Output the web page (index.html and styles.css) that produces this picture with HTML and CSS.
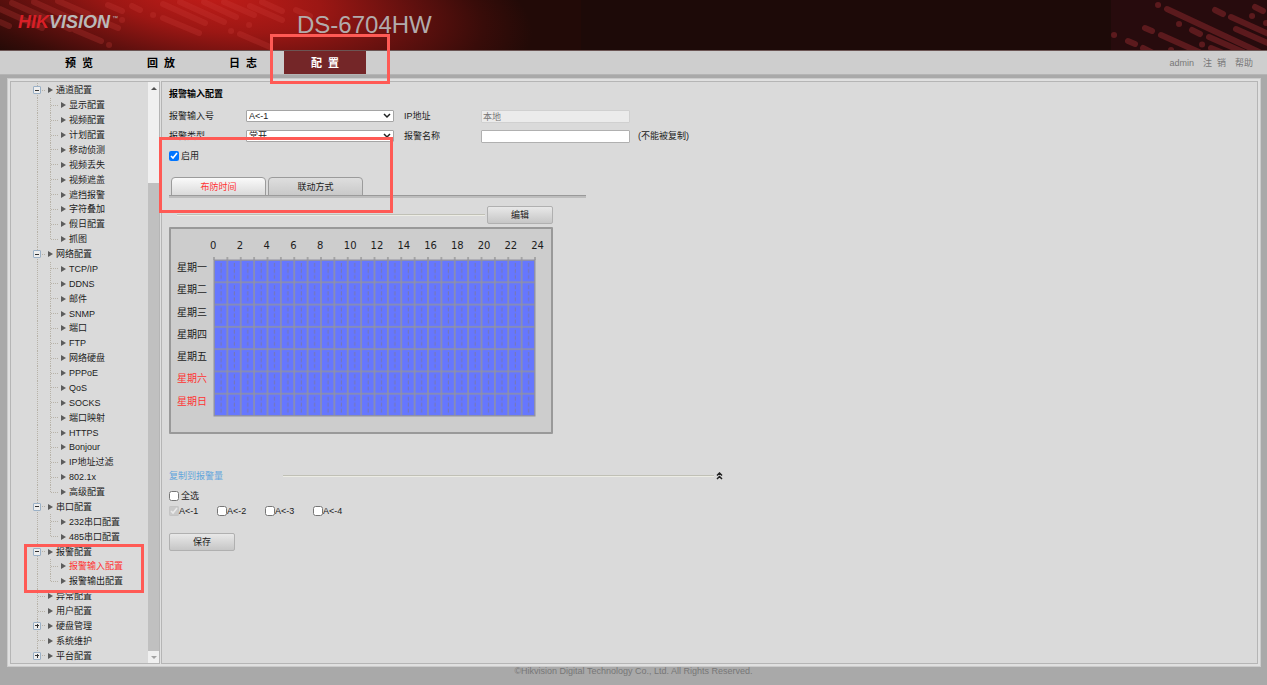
FILE: index.html
```html
<!DOCTYPE html>
<html lang="zh-CN">
<head>
<meta charset="utf-8">
<title>DS-6704HW</title>
<link rel="stylesheet" href="styles.css">
</head>
<body>
<header class="banner">
  <svg class="banner-art" width="581" height="50" viewBox="0 0 581 50" aria-hidden="true">
    <defs>
      <radialGradient id="glow" gradientUnits="userSpaceOnUse" cx="0" cy="0" r="1" gradientTransform="translate(205 -8) rotate(8) scale(330 110)">
        <stop offset="0" stop-color="#c41d19"/>
        <stop offset=".35" stop-color="#9c1714"/>
        <stop offset=".65" stop-color="#5f100e"/>
        <stop offset=".85" stop-color="#380c09"/>
        <stop offset="1" stop-color="#220a07"/>
      </radialGradient>
    </defs>
    <rect width="581" height="50" fill="url(#glow)"/>
    <g stroke="#d0403a" stroke-opacity=".25" stroke-width="6" stroke-linecap="round" fill="none">
      <path d="M0 22l9 4M0 9l42 19M12 3l58 26M34 2l40 18M58 1l30 13M75 30l26 11M109 45h.1M92 17l26 11M108 5l14 6M132 6l8 4M153 15h.1M122 20h.1M163 18l36 15M163 4l42 19M180 2l44 20M231 31h.1M204 2l32 15M249 25h.1M224 2l30 13M250 6l32 14M262 2l20 9M296 10l14 6M240 34l30 13"/>
    </g>
  </svg>
  <svg class="banner-edge" width="156" height="50" viewBox="0 0 156 50" aria-hidden="true">
    <rect width="156" height="50" fill="#270b0d"/>
    <g stroke="#5b1a1d" stroke-width="6" stroke-linecap="round" fill="none">
      <path d="M3 35h.1M17 41l7 3M32 48l10 5M34 28l7 3M50 35l38 17M47 5h.1M56 9l92 43M68 24h.1M81 30l8 4M60 50h.1M91 44.500h.1M100 48l12 5M98 37l34 15M104 10l8 4M120 17l40 18M125 29l34 15M144 7l8 4M141 16h.1M155 23h.1"/>
    </g>
  </svg>
  <div class="logo"><span class="logo-red">HIK</span>VISION<sup class="tm">™</sup></div>
  <h1 class="model">DS-6704HW</h1>
</header>
<nav class="nav">
  <a class="tab-link" href="#">预&nbsp;&nbsp;览</a>
  <a class="tab-link" href="#">回&nbsp;&nbsp;放</a>
  <a class="tab-link" href="#">日&nbsp;&nbsp;志</a>
  <a class="tab-link current" href="#">配&nbsp;&nbsp;置<span class="mark mark-nav"></span></a>
  <div class="user">
    <span>admin</span><a href="#">注&nbsp;&nbsp;销</a><a href="#">帮助</a>
  </div>
</nav>
<div class="frame">
  <aside class="side">
    <ul class="tree">
      <li class="top"><button class="toggle minus" aria-label="收起"></button><a href="#">通道配置</a></li>
      <li class="sub"><a href="#">显示配置</a></li>
      <li class="sub"><a href="#">视频配置</a></li>
      <li class="sub"><a href="#">计划配置</a></li>
      <li class="sub"><a href="#">移动侦测</a></li>
      <li class="sub"><a href="#">视频丢失</a></li>
      <li class="sub"><a href="#">视频遮盖</a></li>
      <li class="sub"><a href="#">遮挡报警</a></li>
      <li class="sub"><a href="#">字符叠加</a></li>
      <li class="sub"><a href="#">假日配置</a></li>
      <li class="sub last"><a href="#">抓图</a></li>
      <li class="top"><button class="toggle minus" aria-label="收起"></button><a href="#">网络配置</a></li>
      <li class="sub"><a href="#">TCP/IP</a></li>
      <li class="sub"><a href="#">DDNS</a></li>
      <li class="sub"><a href="#">邮件</a></li>
      <li class="sub"><a href="#">SNMP</a></li>
      <li class="sub"><a href="#">端口</a></li>
      <li class="sub"><a href="#">FTP</a></li>
      <li class="sub"><a href="#">网络硬盘</a></li>
      <li class="sub"><a href="#">PPPoE</a></li>
      <li class="sub"><a href="#">QoS</a></li>
      <li class="sub"><a href="#">SOCKS</a></li>
      <li class="sub"><a href="#">端口映射</a></li>
      <li class="sub"><a href="#">HTTPS</a></li>
      <li class="sub"><a href="#">Bonjour</a></li>
      <li class="sub"><a href="#">IP地址过滤</a></li>
      <li class="sub"><a href="#">802.1x</a></li>
      <li class="sub last"><a href="#">高级配置</a></li>
      <li class="top"><button class="toggle minus" aria-label="收起"></button><a href="#">串口配置</a></li>
      <li class="sub"><a href="#">232串口配置</a></li>
      <li class="sub last"><a href="#">485串口配置</a></li>
      <li class="top"><button class="toggle minus" aria-label="收起"></button><a href="#">报警配置</a><span class="mark mark-tree"></span></li>
      <li class="sub"><a class="chosen" href="#">报警输入配置</a></li>
      <li class="sub last"><a href="#">报警输出配置</a></li>
      <li class="top leaf"><a href="#">异常配置</a></li>
      <li class="top leaf"><a href="#">用户配置</a></li>
      <li class="top"><button class="toggle plus" aria-label="展开"></button><a href="#">硬盘管理</a></li>
      <li class="top leaf"><a href="#">系统维护</a></li>
      <li class="top"><button class="toggle plus" aria-label="展开"></button><a href="#">平台配置</a></li>
    </ul>
    <div class="scroll" aria-hidden="true">
      <div class="scroll-up"></div>
      <div class="scroll-space"></div>
      <div class="scroll-thumb"></div>
      <div class="scroll-down"></div>
    </div>
  </aside>
  <main class="main">
    <h2 class="heading">报警输入配置</h2>
    <div class="form">
      <label for="alarm-no">报警输入号</label>
      <div class="pick"><select id="alarm-no"><option>A&lt;-1</option></select><svg class="chev" width="8" height="6" viewBox="0 0 8 6"><path d="M1 1l3 3 3-3"/></svg></div>
      <label for="ip">IP地址</label>
      <input id="ip" class="field" type="text" value="本地" disabled>
      <span></span>
      <label for="alarm-type">报警类型</label>
      <div class="pick"><select id="alarm-type"><option>常开</option></select><svg class="chev" width="8" height="6" viewBox="0 0 8 6"><path d="M1 1l3 3 3-3"/></svg></div>
      <label for="alarm-name">报警名称</label>
      <input id="alarm-name" class="field" type="text">
      <span class="note">(不能被复制)</span>
    </div>
    <div class="enable"><input id="enable" type="checkbox" checked><label for="enable">启用</label><span class="mark mark-form"></span></div>
    <div class="tabs">
      <button class="tab active">布防时间</button>
      <button class="tab">联动方式</button>
    </div>
    <div class="edit-row"><span class="rule"></span><button class="btn">编辑</button></div>
    <section class="plan">
      <div class="hours"><span>0</span><span>2</span><span>4</span><span>6</span><span>8</span><span>10</span><span>12</span><span>14</span><span>16</span><span>18</span><span>20</span><span>22</span><span>24</span></div>
      <div class="week">
        <div class="days"><span>星期一</span><span>星期二</span><span>星期三</span><span>星期四</span><span>星期五</span><span class="off">星期六</span><span class="off">星期日</span></div>
        <svg class="cells" width="323" height="161" viewBox="0 0 323 161" aria-hidden="true">
          <defs>
            <pattern id="cell" patternUnits="userSpaceOnUse" x="1" y="4" width="13.375" height="22.286">
              <path d="M7 3v18" stroke="#7676ac" stroke-width="1" stroke-dasharray="4 2" fill="none"/>
              <path d="M0 0v22.300M13.375 0v22.300M0 0h13.400M0 22.286h13.400" stroke="#9092a2" stroke-width="1.500" fill="none"/>
            </pattern>
            <pattern id="tick" patternUnits="userSpaceOnUse" x="1" y="0" width="13.375" height="4">
              <path d="M0 0v4M13.375 0v4" stroke="#999" stroke-width="1.500"/>
            </pattern>
          </defs>
          <rect x="0" y="1" width="323" height="3" fill="url(#tick)"/>
          <rect x="1" y="4" width="321" height="156" fill="#6677ff"/>
          <rect x="1" y="4" width="321" height="156" fill="url(#cell)"/>
          <rect x="1" y="4" width="321" height="156" fill="none" stroke="#9292a0"/>
        </svg>
      </div>
    </section>
    <div class="copy"><span class="copy-title">复制到报警量</span><span class="rule"></span><button class="fold" aria-label="收起"><svg width="7" height="8" viewBox="0 0 7 8"><path d="M1 3.500L3.500 1 6 3.500M1 7l2.500-2.500L6 7"/></svg></button></div>
    <div class="all"><input id="all" type="checkbox"><label for="all">全选</label></div>
    <div class="inputs">
      <label><input type="checkbox" checked disabled>A&lt;-1</label>
      <label><input type="checkbox">A&lt;-2</label>
      <label><input type="checkbox">A&lt;-3</label>
      <label><input type="checkbox">A&lt;-4</label>
    </div>
    <button class="btn">保存</button>
  </main>
</div>
<footer class="foot">©Hikvision Digital Technology Co., Ltd. All Rights Reserved.</footer>
</body>
</html>
```

FILE: styles.css
```css
* { box-sizing: border-box; }

body {
  margin: 0;
  min-height: 100vh;
  display: flex;
  flex-direction: column;
  background: #a9a9a9;
  color: #1c1c1c;
  font: 9px/12px "Liberation Sans", "Noto Sans CJK SC", sans-serif;
}

a { color: inherit; text-decoration: none; }
button, input, select { font: inherit; color: inherit; margin: 0; }

.banner {
  position: relative;
  height: 51px;
  display: flex;
  background: #1d0a08;
  border-bottom: 1px solid #6b5554;
  overflow: hidden;
}
.banner-art { position: absolute; left: 0; top: 0; }
.banner-edge { position: absolute; right: 0; top: 0; }
.logo {
  position: relative;
  width: 297px;
  padding: 12px 0 0 18px;
  color: #b9b9b9;
  font-size: 18px;
  line-height: 20px;
  font-weight: bold;
  font-style: italic;
}
.logo-red { color: #d81f26; }
.tm { font-size: 6px; line-height: 6px; font-weight: normal; font-style: normal; vertical-align: 8px; margin-left: 2px; }
.model {
  position: relative;
  margin: 0;
  padding-top: 11px;
  color: #b2abab;
  font-size: 24px;
  line-height: 28px;
  font-weight: normal;
}

.nav {
  height: 24px;
  display: flex;
  padding: 0 14px 0 38px;
  background: #cecece;
  border-bottom: 1px solid #b4b4b4;
}
.tab-link {
  position: relative;
  width: 82px;
  color: #000;
  font-size: 11px;
  line-height: 24px;
  font-weight: bold;
  text-align: center;
}
.tab-link.current { background: #742628; color: #fff; }
.user { margin-left: auto; display: flex; gap: 9px; line-height: 24px; color: #777; }

.frame {
  flex: 1;
  display: flex;
  gap: 1px;
  margin: 3px 6px 0 7px;
  padding: 2px;
  background: #e0e0e0;
  border: 1px solid #cbcbcb;
}
.side {
  width: 150px;
  display: flex;
  border: 1px solid #b5b5b5;
  background: #dadada;
}
.tree {
  flex: 1;
  display: flex;
  flex-direction: column;
  margin: 0;
  padding: 1px 0 0;
  list-style: none;
  white-space: nowrap;
}
.tree li {
  position: relative;
  flex: 1;
  display: flex;
  align-items: center;
  min-height: 14px;
}
.top {
  padding-left: 22px;
  background:
    repeating-linear-gradient(#b7b2a8 0 1px, transparent 1px 2px) 26px 0 / 1px 100% no-repeat,
    repeating-linear-gradient(90deg, #b7b2a8 0 1px, transparent 1px 2px) 27px 50% / 7px 1px no-repeat;
}
.top.leaf { padding-left: 30px; }
.top:last-child { background-size: 1px 50%, 7px 1px; }
.sub {
  padding-left: 43px;
  background:
    repeating-linear-gradient(#b7b2a8 0 1px, transparent 1px 2px) 26px 0 / 1px 100% no-repeat,
    repeating-linear-gradient(#b7b2a8 0 1px, transparent 1px 2px) 39px 0 / 1px 100% no-repeat,
    repeating-linear-gradient(90deg, #b7b2a8 0 1px, transparent 1px 2px) 40px 50% / 8px 1px no-repeat;
}
.sub.last { background-size: 1px 100%, 1px 50%, 8px 1px; }
.tree a { display: flex; align-items: center; margin-left: 7px; }
.tree a::before {
  content: "";
  margin-right: 3px;
  border: 3px solid transparent;
  border-left: 5px solid #5c5c5c;
  border-right: 0;
}
.tree a.chosen { color: #f33; }
.toggle {
  width: 8px;
  height: 8px;
  padding: 0;
  border: 1px solid #9ab0c6;
  border-radius: 1px;
  background: linear-gradient(#333, #333) center / 4px 1px no-repeat, #ededed;
}
.toggle.plus {
  background: linear-gradient(#333, #333) center / 4px 1px no-repeat, linear-gradient(#333, #333) center / 1px 4px no-repeat, #ededed;
}

.scroll { width: 11px; display: flex; flex-direction: column; background: #f0f0f0; }
.scroll-up, .scroll-down { height: 12px; display: grid; place-content: center; }
.scroll-up::before { content: ""; border: 3px solid transparent; border-bottom-color: #505050; border-top: 0; }
.scroll-down::before { content: ""; border: 3px solid transparent; border-top-color: #a3a3a3; border-bottom: 0; }
.scroll-space { flex: 89; }
.scroll-thumb { flex: 467; background: #c0c0c0; }

.main {
  flex: 1;
  padding: 6px 7px;
  border: 1px solid #b5b5b5;
  background: #dadada;
}
.heading { margin: 0 0 6px; font-size: 9px; line-height: 12px; color: #000; }
.form {
  display: grid;
  grid-template-columns: 77px 148px 87px 149px auto;
  grid-auto-rows: 20px;
  align-items: center;
}
.form > label:nth-of-type(even) { padding-left: 10px; }
.pick { position: relative; display: flex; }
.pick select {
  appearance: none;
  width: 100%;
  height: 12px;
  padding: 0 2px;
  border: 1px solid #a5a5a5;
  border-radius: 1px;
  background: #fff;
  color: #222;
  line-height: 10px;
}
.chev { position: absolute; right: 3px; top: 3px; pointer-events: none; }
.chev path { fill: none; stroke: #222; stroke-width: 1.5; }
.field {
  height: 13px;
  padding: 0 1px;
  border: 1px solid #b0b0b0;
  border-radius: 1px;
  background: #fff;
}
.field:disabled { background: #ebebeb; border-color: #d0d0d0; color: #777; }
.note { padding-left: 8px; }

input[type="checkbox"] { width: 10px; height: 10px; }
.enable { position: relative; height: 20px; display: flex; align-items: center; gap: 2px; }

.tabs {
  width: 417px;
  display: flex;
  gap: 2px;
  margin-top: 11px;
  padding-left: 2px;
  border-bottom: 2px solid #bdbdbd;
  box-shadow: inset 0 -1px #999;
}
.tab {
  width: 95px;
  height: 19px;
  padding: 0;
  border: 1px solid #9b9b9b;
  border-radius: 4px 4px 0 0;
  background: linear-gradient(#dedede, #c9c9c9);
}
.tab.active { background: linear-gradient(#fafafa, #dadada); color: #f33; }
.edit-row { width: 384px; display: flex; align-items: center; gap: 2px; margin: 8px 0 3px; padding-left: 8px; }
.rule { flex: 1; height: 2px; background: #c0c0b6; border-bottom: 1px solid #ecece4; }
.btn {
  width: 66px;
  height: 18px;
  padding: 0;
  border: 1px solid #b0b0b0;
  border-radius: 2px;
  background: linear-gradient(#e8e8e8, #c6c6c6);
}

.plan {
  width: 384px;
  height: 207px;
  padding: 11px 0 0 6px;
  border: 2px solid #999;
  border-radius: 1px;
  background: #cdcdcd;
}
.hours {
  width: 348px;
  display: grid;
  grid-template-columns: repeat(13, 1fr);
  margin-left: 33px;
  font: 10px/12px "DejaVu Sans", sans-serif;
}
.week { display: flex; padding-top: 4px; }
.days { width: 36px; display: flex; flex-direction: column; padding: 4px 0 1px; font-size: 10px; }
.days span { flex: 1; display: flex; align-items: flex-start; padding-top: 2px; }
.days .off { color: #f33; }
.cells { display: block; }

.copy { width: 554px; display: flex; align-items: center; margin-top: 36px; }
.copy-title { width: 114px; color: #62a5dc; }
.fold { display: flex; padding: 0 0 0 2px; border: 0; background: none; }
.fold path { fill: none; stroke: #222; stroke-width: 1.5; }
.all { height: 15px; display: flex; align-items: center; gap: 2px; margin-top: 6px; }
.inputs { display: grid; grid-template-columns: repeat(4, 48px); height: 15px; margin-bottom: 15px; }
.inputs label { display: flex; align-items: center; }

.mark { position: absolute; z-index: 2; border: 3px solid #ff5a55; pointer-events: none; }
.mark-nav { left: -14px; top: -17px; width: 120px; height: 50px; }
.mark-tree { left: 13px; top: 0; width: 120px; height: 49px; }
.mark-form { left: -10px; top: -9px; width: 234px; height: 76px; }

.foot { height: 18px; line-height: 9px; text-align: center; color: #777; }
```
